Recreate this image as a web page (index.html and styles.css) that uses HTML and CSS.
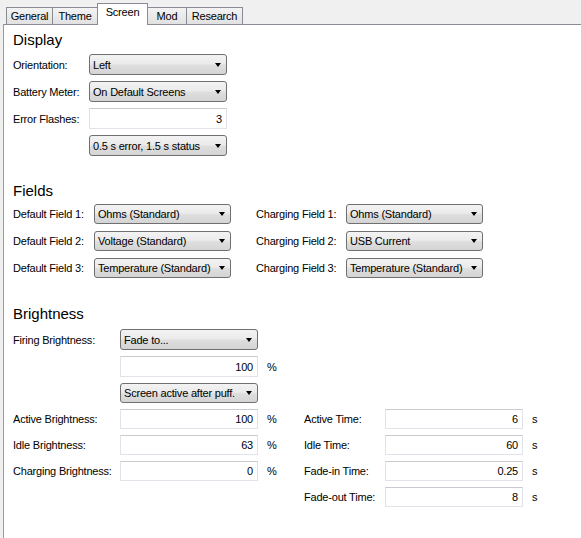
FILE: index.html
```html
<!DOCTYPE html>
<html>
<head>
<meta charset="utf-8">
<link rel="stylesheet" href="styles.css">
</head>
<body>
<div class="tabs">
  <div class="tab w-general">General</div>
  <div class="tab w-theme">Theme</div>
  <div class="tab active w-screen">Screen</div>
  <div class="tab w-mod">Mod</div>
  <div class="tab w-research">Research</div>
</div>
<div class="panel">
  <h2 class="heading">Display</h2>
  <div class="grid grid-display">
    <div class="label">Orientation:</div>
    <div class="combo">Left</div>
    <div class="label">Battery Meter:</div>
    <div class="combo">On Default Screens</div>
    <div class="label">Error Flashes:</div>
    <div class="textbox">3</div>
    <div></div>
    <div class="combo">0.5 s error, 1.5 s status</div>
  </div>

  <h2 class="heading h-fields">Fields</h2>
  <div class="grid grid-fields">
    <div class="label">Default Field 1:</div>
    <div class="combo">Ohms (Standard)</div>
    <div></div>
    <div class="label">Charging Field 1:</div>
    <div class="combo">Ohms (Standard)</div>
    <div class="label">Default Field 2:</div>
    <div class="combo">Voltage (Standard)</div>
    <div></div>
    <div class="label">Charging Field 2:</div>
    <div class="combo">USB Current</div>
    <div class="label">Default Field 3:</div>
    <div class="combo">Temperature (Standard)</div>
    <div></div>
    <div class="label">Charging Field 3:</div>
    <div class="combo">Temperature (Standard)</div>
  </div>

  <h2 class="heading h-bright">Brightness</h2>
  <div class="grid grid-bright">
    <div class="label">Firing Brightness:</div>
    <div class="combo">Fade to...</div>
    <div></div><div></div><div></div><div></div>

    <div></div>
    <div class="textbox">100</div>
    <div class="unit">%</div>
    <div></div><div></div><div></div>

    <div></div>
    <div class="combo">Screen active after puff.</div>
    <div></div><div></div><div></div><div></div>

    <div class="label">Active Brightness:</div>
    <div class="textbox">100</div>
    <div class="unit">%</div>
    <div class="label">Active Time:</div>
    <div class="textbox">6</div>
    <div class="unit">s</div>

    <div class="label">Idle Brightness:</div>
    <div class="textbox">63</div>
    <div class="unit">%</div>
    <div class="label">Idle Time:</div>
    <div class="textbox">60</div>
    <div class="unit">s</div>

    <div class="label">Charging Brightness:</div>
    <div class="textbox">0</div>
    <div class="unit">%</div>
    <div class="label">Fade-in Time:</div>
    <div class="textbox">0.25</div>
    <div class="unit">s</div>

    <div></div><div></div><div></div>
    <div class="label">Fade-out Time:</div>
    <div class="textbox">8</div>
    <div class="unit">s</div>
  </div>
</div>
</body>
</html>
```
FILE: styles.css
```css
html, body {
  margin: 0;
  padding: 0;
}
body {
  width: 581px;
  height: 538px;
  overflow: hidden;
  background: #f0f0f0;
  font-family: "Liberation Sans", Arial, sans-serif;
  font-size: 11px;
  letter-spacing: -0.2px;
  color: #000;
}
.tabs {
  display: flex;
  align-items: flex-end;
  height: 24px;
  padding-left: 6px;
}
.tab {
  box-sizing: border-box;
  height: 17px;
  margin-right: -1px;
  border: 1px solid #898c95;
  border-bottom: none;
  background: linear-gradient(#f3f3f3, #e1e1e1);
  text-align: center;
  line-height: 16px;
}
.tab.active {
  position: relative;
  z-index: 1;
  height: 22px;
  margin-bottom: -1px;
  background: #fff;
  line-height: 17px;
}
.w-general { width: 47px; }
.w-theme { width: 46px; }
.w-screen { width: 51px; }
.w-mod { width: 40px; }
.w-research { width: 57px; }

.panel {
  box-sizing: border-box;
  margin-left: 3px;
  height: 514px;
  border-top: 1px solid #898c95;
  border-left: 1px solid #9a9a9a;
  background: #fff;
  padding: 6px 0 0 9px;
}
.heading {
  margin: 0;
  font-size: 15px;
  font-weight: normal;
  line-height: 17px;
  letter-spacing: 0;
}
.h-fields { margin-top: 26px; }
.h-bright { margin-top: 27px; }

.grid {
  display: grid;
  align-items: center;
}
.grid-display {
  margin-top: 6px;
  grid-template-columns: 76px 138px;
  grid-template-rows: 21px 21px 21px 21px;
  row-gap: 6px;
}
.grid-fields {
  margin-top: 5px;
  grid-template-columns: 81px 137px 25px 90px 137px;
  grid-template-rows: 20px 20px 20px;
  row-gap: 7px;
}
.grid-bright {
  margin-top: 7px;
  grid-template-columns: 107px 138px 46px 81px 138px 30px;
  grid-template-rows: 21px 21px 20px 20px 20px 20px 20px;
  row-gap: 6px;
}
.label {
  white-space: nowrap;
}
.combo {
  position: relative;
  box-sizing: border-box;
  height: 100%;
  border: 1px solid #707070;
  border-radius: 3px;
  background: linear-gradient(#f3f3f3 0%, #ebebeb 45%, #dedede 55%, #d4d4d4 100%);
  padding-left: 3px;
  display: flex;
  align-items: center;
  white-space: nowrap;
}
.combo::after {
  content: "";
  position: absolute;
  right: 5px;
  top: 50%;
  margin-top: -2px;
  border-left: 3.5px solid transparent;
  border-right: 3.5px solid transparent;
  border-top: 4px solid #000;
}
.textbox {
  box-sizing: border-box;
  height: 100%;
  border: 1px solid #e2e3ea;
  border-top-color: #c8cacf;
  background: #fff;
  padding-right: 4px;
  display: flex;
  align-items: center;
  justify-content: flex-end;
}
.unit {
  padding-left: 9px;
}
```
